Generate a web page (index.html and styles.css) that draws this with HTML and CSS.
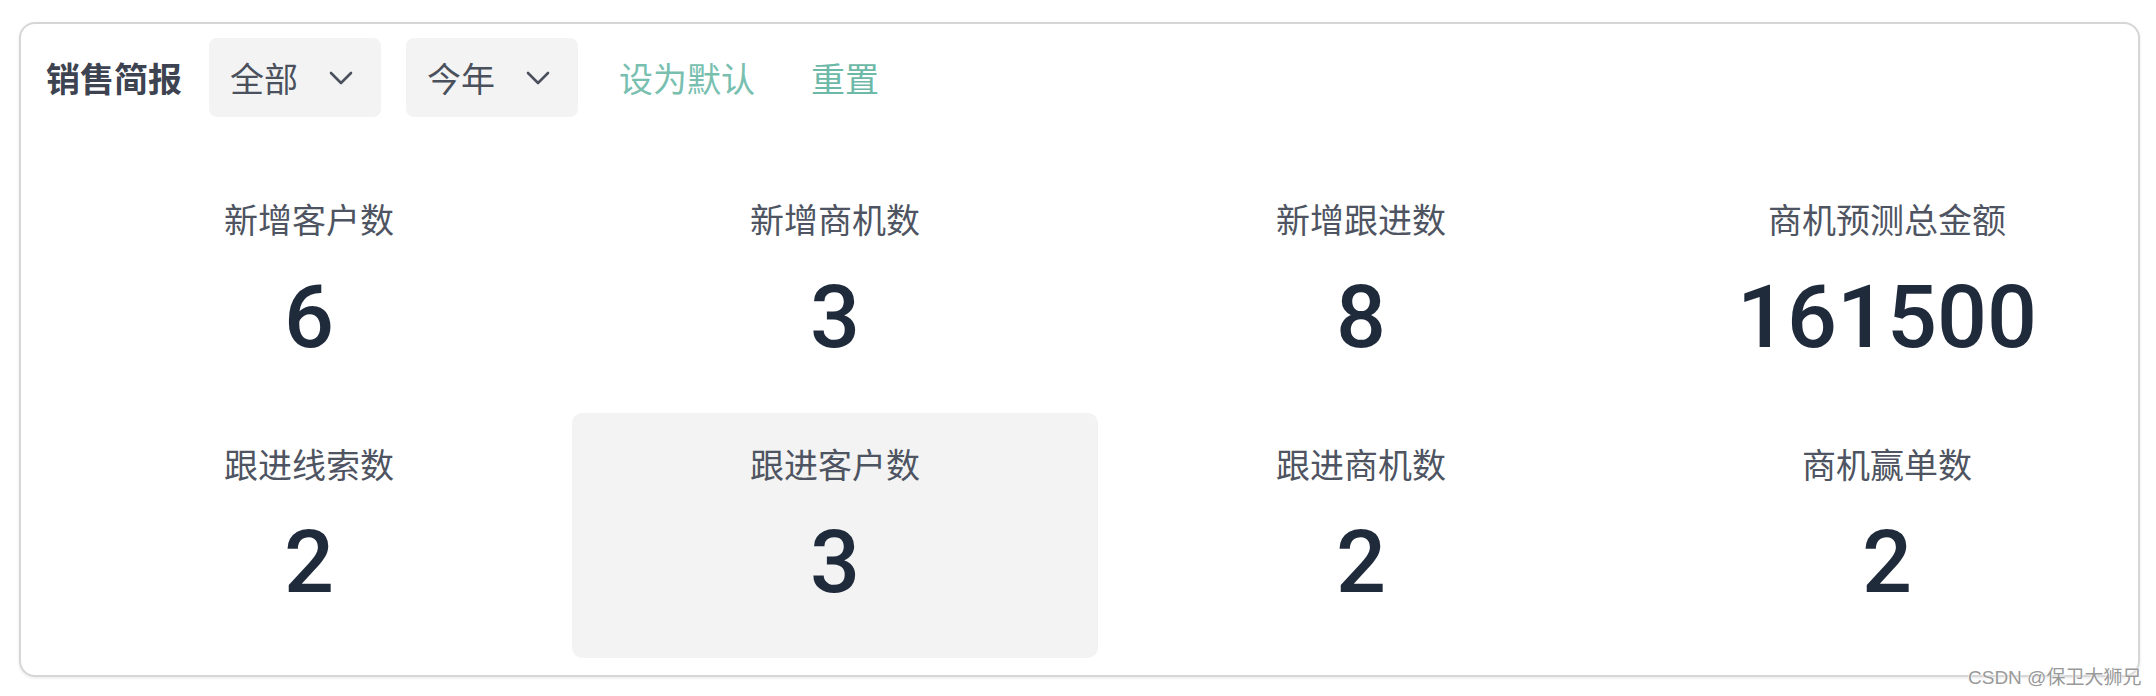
FILE: index.html
```html
<!DOCTYPE html>
<html lang="zh-CN">
  <head>
    <meta charset="UTF-8" />
    <title>销售简报</title>
    <link rel="stylesheet" href="styles.css">
  </head>
  <body>
    <div class="card">
      <div class="toolbar">
        <span class="title">销售简报</span>
        <div class="select">
          <span>全部</span>
          <svg class="chevron" width="24" height="14" viewBox="0 0 24 14"><polyline points="2,2 12,12 22,2" /></svg>
        </div>
        <div class="select">
          <span>今年</span>
          <svg class="chevron" width="24" height="14" viewBox="0 0 24 14"><polyline points="2,2 12,12 22,2" /></svg>
        </div>
        <a class="link link-default">设为默认</a>
        <a class="link link-reset">重置</a>
      </div>

      <div class="stats">
        <div class="stat">
          <div class="label">新增客户数</div>
          <div class="value">6</div>
        </div>
        <div class="stat">
          <div class="label">新增商机数</div>
          <div class="value">3</div>
        </div>
        <div class="stat">
          <div class="label">新增跟进数</div>
          <div class="value">8</div>
        </div>
        <div class="stat">
          <div class="label">商机预测总金额</div>
          <div class="value">161500</div>
        </div>
        <div class="stat">
          <div class="label">跟进线索数</div>
          <div class="value">2</div>
        </div>
        <div class="stat active">
          <div class="label">跟进客户数</div>
          <div class="value">3</div>
        </div>
        <div class="stat">
          <div class="label">跟进商机数</div>
          <div class="value">2</div>
        </div>
        <div class="stat">
          <div class="label">商机赢单数</div>
          <div class="value">2</div>
        </div>
      </div>
    </div>

    <div class="watermark">CSDN @保卫大狮兄</div>
  </body>
</html>
```

FILE: styles.css
```css
* {
  margin: 0;
  padding: 0;
  box-sizing: border-box;
}
body {
  position: relative;
  width: 2156px;
  height: 696px;
  background-color: #ffffff;
  font-family: "Noto Sans CJK SC", "Noto Sans", sans-serif;
  overflow: hidden;
}
.card {
  margin: 22px 0 0 19px;
  width: 2121px;
  height: 655px;
  padding: 14px 0 0 25px;
  border: 2px solid #d6d6d6;
  border-radius: 16px;
  box-shadow: 0 1px 3px rgba(0, 0, 0, 0.1);
}
.toolbar {
  display: flex;
  align-items: center;
  gap: 25px;
  height: 79px;
}
.title {
  font-size: 34px;
  font-weight: 700;
  color: #3d4350;
  margin-right: 2px;
}
.select {
  display: flex;
  align-items: center;
  justify-content: space-between;
  width: 172px;
  height: 79px;
  padding: 0 28px 0 21px;
  background-color: #f3f3f3;
  border-radius: 8px;
  font-size: 34px;
  color: #4a505c;
}
.chevron polyline {
  fill: none;
  stroke: #4a505c;
  stroke-width: 2.6;
  stroke-linecap: round;
  stroke-linejoin: round;
}
.link {
  font-size: 34px;
  color: #78bfb0;
  cursor: pointer;
}
.link-default {
  margin-left: 16px;
}
.link-reset {
  margin-left: 31px;
  color: #6cb9a8;
}
.stats {
  display: grid;
  grid-template-columns: repeat(4, 526px);
  grid-auto-rows: 245px;
  margin-top: 51px;
}
.stat {
  padding-top: 27px;
  text-align: center;
  border-radius: 10px;
}
.stat.active {
  background-color: #f3f3f3;
}
.label {
  font-size: 34px;
  line-height: 48px;
  color: #4e5461;
}
.value {
  margin-top: 30px;
  font-family: Roboto, "Liberation Sans", sans-serif;
  font-size: 88px;
  line-height: 1;
  font-weight: 500;
  color: #1f2a3b;
}
.watermark {
  position: absolute;
  left: 1968px;
  top: 662px;
  font-family: "Liberation Sans", "Noto Sans CJK SC", sans-serif;
  font-size: 19px;
  color: #999999;
  text-shadow: 0 0 2px #ffffff, 0 0 2px #ffffff;
}
```
